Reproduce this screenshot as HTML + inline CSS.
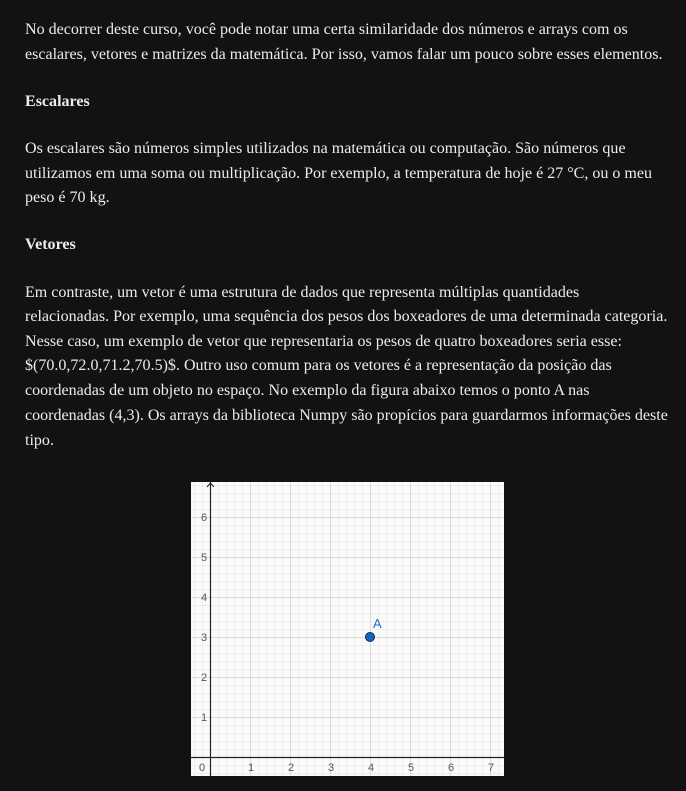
<!DOCTYPE html>
<html><head><meta charset="utf-8"><style>
html,body{margin:0;padding:0;background:#121212;}
body{width:686px;height:791px;overflow:hidden;font-family:"Liberation Serif",serif;color:#ececec;font-size:16.05px;}
.w{position:absolute;left:25px;top:0;width:660px;}
p{margin:0;line-height:24.6px;white-space:nowrap;}
.l{position:absolute;left:0;}
b{font-weight:bold;}
svg{position:absolute;left:191px;top:482px;}
</style></head><body>
<div class="w">
<p class="l" style="top:18px">No decorrer deste curso, você pode notar uma certa similaridade dos números e arrays com os</p>
<p class="l" style="top:43px">escalares, vetores e matrizes da matemática. Por isso, vamos falar um pouco sobre esses elementos.</p>
<p class="l" style="top:90px"><b>Escalares</b></p>
<p class="l" style="top:137px">Os escalares são números simples utilizados na matemática ou computação. São números que</p>
<p class="l" style="top:162px">utilizamos em uma soma ou multiplicação. Por exemplo, a temperatura de hoje é 27 °C, ou o meu</p>
<p class="l" style="top:186px">peso é 70 kg.</p>
<p class="l" style="top:233px"><b>Vetores</b></p>
<p class="l" style="top:281px">Em contraste, um vetor é uma estrutura de dados que representa múltiplas quantidades</p>
<p class="l" style="top:305px">relacionadas. Por exemplo, uma sequência dos pesos dos boxeadores de uma determinada categoria.</p>
<p class="l" style="top:330px">Nesse caso, um exemplo de vetor que representaria os pesos de quatro boxeadores seria esse:</p>
<p class="l" style="top:354px">$(70.0,72.0,71.2,70.5)$. Outro uso comum para os vetores é a representação da posição das</p>
<p class="l" style="top:379px">coordenadas de um objeto no espaço. No exemplo da figura abaixo temos o ponto A nas</p>
<p class="l" style="top:404px">coordenadas (4,3). Os arrays da biblioteca Numpy são propícios para guardarmos informações deste</p>
<p class="l" style="top:429px">tipo.</p>
</div>
<svg width="313" height="294" viewBox="0 0 313 294" font-family="Liberation Sans, sans-serif" font-size="11">
<rect width="313" height="294" fill="#fafafa"/>
<defs>
<pattern id="m" x="19" y="275" width="8" height="8" patternUnits="userSpaceOnUse"><path d="M0 0H8M0 0V8" stroke="#e2e2e2" stroke-width="1"/></pattern>
<pattern id="M" x="19" y="275" width="40" height="40" patternUnits="userSpaceOnUse"><path d="M0 0H40M0 0V40" stroke="#bdbdbd" stroke-width="1"/></pattern>
</defs>
<rect width="313" height="294" fill="url(#m)"/>
<rect width="313" height="294" fill="url(#M)"/>
<path d="M19.5 0V294M0 275.5H313" stroke="#222" stroke-width="1.2"/>
<path d="M16 5L19.5 1L23 5" stroke="#222" fill="none"/>
<g fill="#555">
<text x="8" y="289">0</text>
<text x="57" y="289">1</text><text x="97" y="289">2</text><text x="137" y="289">3</text><text x="177" y="289">4</text><text x="217" y="289">5</text><text x="257" y="289">6</text><text x="297" y="289">7</text>
<text x="10" y="239">1</text><text x="10" y="199">2</text><text x="10" y="159">3</text><text x="10" y="119">4</text><text x="10" y="79">5</text><text x="10" y="39">6</text>
</g>
<circle cx="179" cy="155" r="4.5" fill="#1565c0" stroke="#0d2b55" stroke-width="1"/>
<text x="182" y="146" fill="#1e6fd0" font-size="13">A</text>
</svg>
</body></html>
